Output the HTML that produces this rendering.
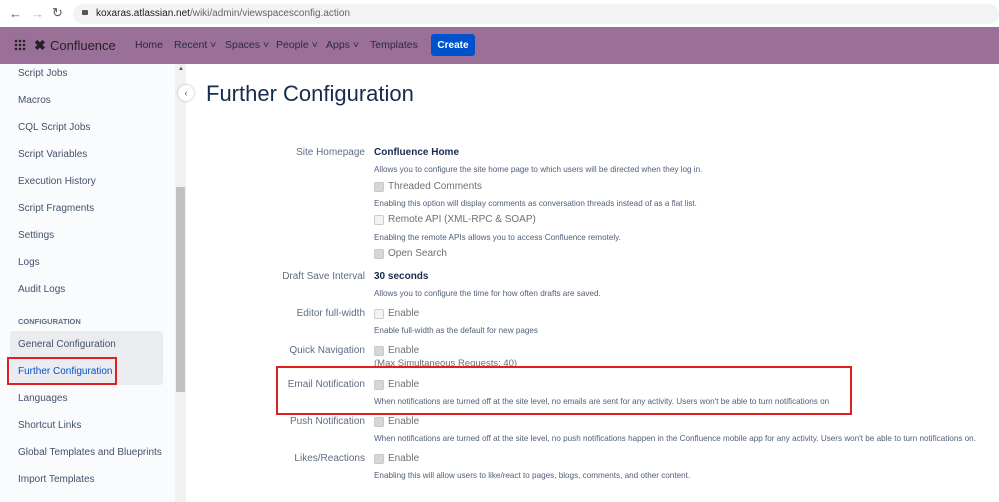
<!DOCTYPE html>
<html><head><style>
body{margin:0;width:999px;height:502px;overflow:hidden;position:relative;font-family:"Liberation Sans",sans-serif;background:#fff;color:#172b4d}
.a{position:absolute;white-space:nowrap}
.sb{font-size:10px;color:#42526e;left:18px}
.lb{font-size:10px;color:#5e6c84;right:634px;text-align:right}
.v{font-size:10px;color:#707070;left:388px}
.d{font-size:8.15px;color:#505f79;left:374px}
.cb{position:absolute;left:374px;width:8px;height:8px;border:1px solid #ccc;border-radius:2px;background:#f4f4f4}
.cb.k{background:#d6d6d6;border-color:#c8c8c8}
.nav{font-size:10.5px;color:#2b2b3a;top:39px}
</style></head><body>
<div class="a" style="left:0;top:0;width:999px;height:27px;background:#fff"></div>
<div class="a" style="left:73px;top:4px;width:926px;height:20px;background:#f1f3f4;border-radius:10px"></div>
<div class="a" style="left:9px;top:6px;font-size:13px;color:#555">←</div>
<div class="a" style="left:31px;top:6px;font-size:13px;color:#bbb">→</div>
<div class="a" style="left:52px;top:5px;font-size:13px;color:#555">↻</div>
<div class="a" style="left:82px;top:10px;width:6px;height:5px;background:#555;border-radius:1px"></div>
<div class="a" style="left:96px;top:8px;font-size:10px;color:#202124">koxaras.atlassian.net<span style="color:#666">/wiki/admin/viewspacesconfig.action</span></div>
<div class="a" style="left:0;top:27px;width:999px;height:37px;background:#9b7098"></div>
<div class="a" style="left:14px;top:39px;width:12px;height:12px;background:radial-gradient(circle,#222 1.2px,transparent 1.4px) 0 0/4px 4px"></div>
<div class="a" style="left:34px;top:37px;font-size:14px;color:#222;font-weight:bold">✖</div>
<div class="a" style="left:50px;top:38px;font-size:13px;color:#222">Confluence</div>
<div class="a nav" style="left:135px">Home</div>
<div class="a nav" style="left:174px">Recent ˅</div>
<div class="a nav" style="left:225px">Spaces ˅</div>
<div class="a nav" style="left:276px">People ˅</div>
<div class="a nav" style="left:326px">Apps ˅</div>
<div class="a nav" style="left:370px">Templates</div>
<div class="a" style="left:431px;top:34px;width:44px;height:16px;padding-top:6px;background:#0052cc;border-radius:3px;color:#fff;font-size:10px;font-weight:bold;text-align:center">Create</div>
<div class="a" style="left:0;top:64px;width:175px;height:438px;background:#fafbfc"></div>
<div class="a" style="left:175px;top:64px;width:11px;height:438px;background:#f1f1f1"></div>
<div class="a" style="left:176px;top:187px;width:9px;height:205px;background:#c1c1c1"></div>
<div class="a" style="left:178px;top:66px;font-size:6px;color:#555">▲</div>
<div class="a" style="left:178px;top:85px;width:16px;height:16px;border-radius:50%;background:#fff;box-shadow:0 0 2px #aaa;font-size:9px;text-align:center;line-height:16px;color:#42526e">‹</div>
<div class="a" style="left:10px;top:331px;width:153px;height:54px;background:#ebecf0;border-radius:3px"></div>
<div class="a sb" style="top:68px">Script Jobs</div>
<div class="a sb" style="top:95px">Macros</div>
<div class="a sb" style="top:122px">CQL Script Jobs</div>
<div class="a sb" style="top:149px">Script Variables</div>
<div class="a sb" style="top:176px">Execution History</div>
<div class="a sb" style="top:203px">Script Fragments</div>
<div class="a sb" style="top:230px">Settings</div>
<div class="a sb" style="top:257px">Logs</div>
<div class="a sb" style="top:284px">Audit Logs</div>
<div class="a sb" style="top:317px;font-size:7.5px;font-weight:bold;color:#5e6c84">CONFIGURATION</div>
<div class="a sb" style="top:339px">General Configuration</div>
<div class="a sb" style="top:366px;color:#0052cc">Further Configuration</div>
<div class="a" style="left:7px;top:357px;width:106px;height:24px;border:2px solid #e02020"></div>
<div class="a sb" style="top:393px">Languages</div>
<div class="a sb" style="top:420px">Shortcut Links</div>
<div class="a sb" style="top:447px">Global Templates and Blueprints</div>
<div class="a sb" style="top:474px">Import Templates</div>
<div class="a" style="left:206px;top:81px;font-size:22px;color:#172b4d">Further Configuration</div>
<div class="a lb" style="top:147px">Site Homepage</div>
<div class="a" style="left:374px;top:147px;font-size:10px;font-weight:bold;color:#172b4d">Confluence Home</div>
<div class="a d" style="top:165px">Allows you to configure the site home page to which users will be directed when they log in.</div>
<div class="cb k" style="top:182px"></div><div class="a v" style="top:181px">Threaded Comments</div>
<div class="a d" style="top:199px">Enabling this option will display comments as conversation threads instead of as a flat list.</div>
<div class="cb" style="top:215px"></div><div class="a v" style="top:214px">Remote API (XML-RPC &amp; SOAP)</div>
<div class="a d" style="top:233px">Enabling the remote APIs allows you to access Confluence remotely.</div>
<div class="cb k" style="top:249px"></div><div class="a v" style="top:248px">Open Search</div>
<div class="a lb" style="top:271px">Draft Save Interval</div>
<div class="a" style="left:374px;top:271px;font-size:10px;font-weight:bold;color:#172b4d">30 seconds</div>
<div class="a d" style="top:289px">Allows you to configure the time for how often drafts are saved.</div>
<div class="a lb" style="top:308px">Editor full-width</div>
<div class="cb" style="top:309px"></div><div class="a v" style="top:308px">Enable</div>
<div class="a d" style="top:326px">Enable full-width as the default for new pages</div>
<div class="a lb" style="top:345px">Quick Navigation</div>
<div class="cb k" style="top:346px"></div><div class="a v" style="top:345px">Enable</div>
<div class="a d" style="top:358px;font-size:9.5px;color:#707070">(Max Simultaneous Requests: 40)</div>
<div class="a" style="left:276px;top:366px;width:572px;height:45px;border:2px solid #e02020"></div>
<div class="a lb" style="top:379px">Email Notification</div>
<div class="cb k" style="top:380px"></div><div class="a v" style="top:379px">Enable</div>
<div class="a d" style="top:397px">When notifications are turned off at the site level, no emails are sent for any activity. Users won't be able to turn notifications on</div>
<div class="a lb" style="top:416px">Push Notification</div>
<div class="cb k" style="top:417px"></div><div class="a v" style="top:416px">Enable</div>
<div class="a d" style="top:434px">When notifications are turned off at the site level, no push notifications happen in the Confluence mobile app for any activity. Users won't be able to turn notifications on.</div>
<div class="a lb" style="top:453px">Likes/Reactions</div>
<div class="cb k" style="top:454px"></div><div class="a v" style="top:453px">Enable</div>
<div class="a d" style="top:471px">Enabling this will allow users to like/react to pages, blogs, comments, and other content.</div>
</body></html>
